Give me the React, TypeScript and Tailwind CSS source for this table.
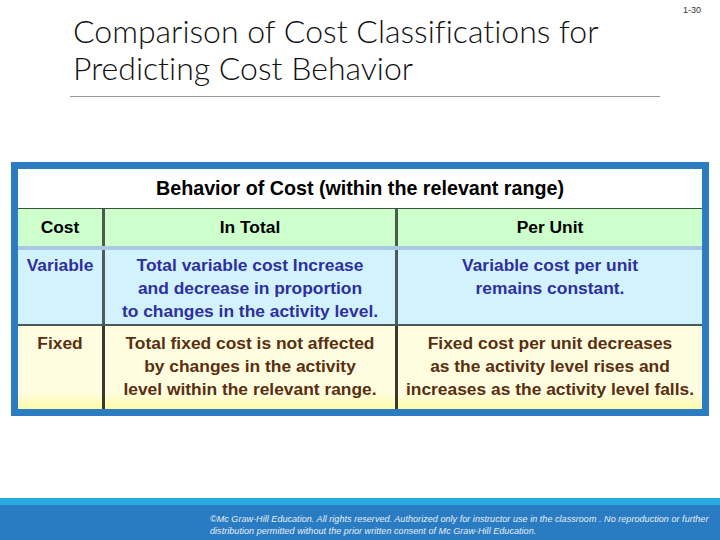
// Slide: comparison of cost classifications (fixed vs variable behavior table).
const rowText = "font-['Liberation_Sans',Arial,sans-serif] font-bold text-[17.4px] leading-[23px]";

export default function App() {
  return (
    <div className="relative flex h-[540px] w-[720px] flex-col overflow-hidden bg-white">
      <div className="absolute right-[19px] top-[4px] font-['Liberation_Sans',Arial,sans-serif] text-[9px] text-[#333]">
        1-30
      </div>

      {/* title */}
      <div className="ml-[73px] mt-[12px] w-[600px] font-['Lato',sans-serif] text-[32px] font-light leading-[37px] text-[#111] [font-variant-ligatures:none]">
        <div>Comparison of Cost Classifications for</div>
        <div>Predicting Cost Behavior</div>
      </div>
      <div className="ml-[70px] mt-[10px] h-px w-[590px] bg-[#9a9a9a]" />

      {/* table in blue frame */}
      <div className="ml-[11px] mt-[65px] w-[698px] border-[7px] border-[#2b7cc1] bg-white">
        <div className="flex h-[40px] items-center justify-center border-b border-[#3f4f3f] font-['Liberation_Sans',Arial,sans-serif] text-[19.7px] font-bold text-black">
          Behavior of Cost (within the relevant range)
        </div>

        <div className="grid grid-cols-[84px_293px_1fr] bg-[#ccffcc]">
          <div className="flex h-[37px] items-center justify-center font-['Liberation_Sans',Arial,sans-serif] text-[17.4px] font-bold text-black">
            Cost
          </div>
          <div className="flex items-center justify-center border-l-[3px] border-[#4c5c4c] font-['Liberation_Sans',Arial,sans-serif] text-[17.4px] font-bold text-black">
            In Total
          </div>
          <div className="flex items-center justify-center border-l-[3px] border-[#4c5c4c] font-['Liberation_Sans',Arial,sans-serif] text-[17.4px] font-bold text-black">
            Per Unit
          </div>
        </div>

        <div className="h-[4px] bg-[#a9c8e6]" />

        <div className="grid grid-cols-[84px_293px_1fr] border-b-2 border-[#4a5a5a] bg-[#d2f3fd] text-[#2e2fa0]">
          <div className={`pt-[4px] text-center ${rowText}`}>Variable</div>
          <div className={`border-l-[3px] border-[#4c5c5c] pb-[1px] pt-[4px] text-center ${rowText}`}>
            Total variable cost Increase
            <br />
            and decrease in proportion
            <br />
            to changes in the activity level.
          </div>
          <div className={`border-l-[3px] border-[#4c5c5c] pt-[4px] text-center ${rowText}`}>
            Variable cost per unit
            <br />
            remains constant.
          </div>
        </div>

        <div className="grid grid-cols-[84px_293px_1fr] bg-gradient-to-b from-[#fffde0] from-80% to-[#fffaa8] text-[#5a2f0f]">
          <div className={`pt-[6px] text-center ${rowText}`}>Fixed</div>
          <div className={`border-l-[3px] border-[#3a3a2a] pb-[8px] pt-[6px] text-center ${rowText}`}>
            Total fixed cost is not affected
            <br />
            by changes in the activity
            <br />
            level within the relevant range.
          </div>
          <div className={`border-l-[3px] border-[#3a3a2a] pt-[6px] text-center ${rowText}`}>
            Fixed cost per unit decreases
            <br />
            as the activity level rises and
            <br />
            increases as the activity level falls.
          </div>
        </div>
      </div>

      {/* footer */}
      <div className="mt-auto h-[7px] bg-[#27a9e1]" />
      <div className="h-[35px] bg-[#2a7cc2] pl-[210px] pt-[8px] font-['Liberation_Sans',Arial,sans-serif] text-[9px] italic leading-[12px] tracking-[0.05px] text-[#e6eef6]">
        <div>©Mc Graw-Hill Education. All rights reserved. Authorized only for instructor use in the classroom . No reproduction or further</div>
        <div>distribution permitted without the prior written consent of Mc Graw-Hill Education.</div>
      </div>
    </div>
  );
}
